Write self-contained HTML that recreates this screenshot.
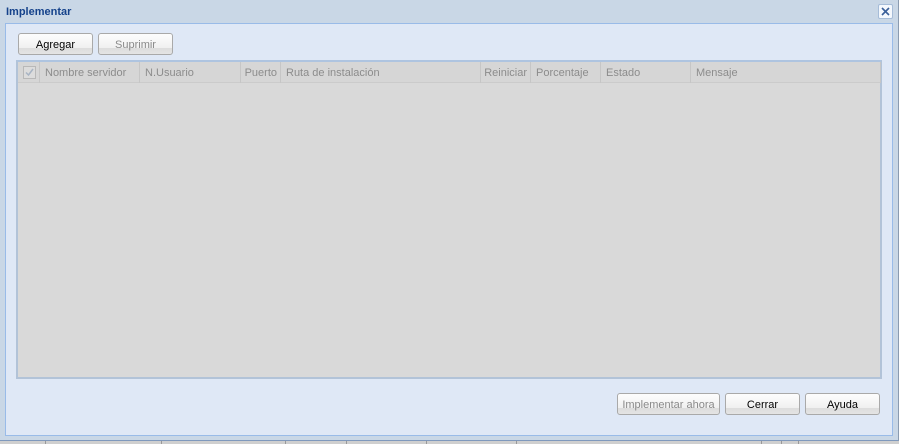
<!DOCTYPE html>
<html><head><meta charset="utf-8"><style>
*{margin:0;padding:0;box-sizing:border-box}
body{width:899px;height:444px;overflow:hidden;background:#cfcfcf;font-family:"Liberation Sans",sans-serif;font-size:11px;position:relative}
.win{position:absolute;left:0;top:0;width:899px;height:441px;background:#c9d7e6;border-right:1px solid #8a9bb0;border-bottom:1px solid #7f99bd}
.title{position:absolute;left:6px;top:6px;font-weight:bold;color:#15428b;font-size:11px}
.close{position:absolute;left:878px;top:4px;width:15px;height:15px;background:#f4f8fd;border:1px solid #a6bcd8;border-radius:2px}
.panel{position:absolute;left:5px;top:23px;width:888px;height:413px;background:#dfe8f6;border:1px solid #99bbe8}
.btn{position:absolute;height:22px;border:1px solid #a9a9a9;border-radius:3px;background:linear-gradient(#fdfdfd,#f0f0f0 70%,#dcdcdc 70%,#e4e4e4);text-align:center;line-height:22px;color:#000;font-size:11px}
.dis{color:#8a8a8a}
.grid{position:absolute;left:16px;top:60px;width:866px;height:319px;background:#d9d9d9;border:2px solid #b2c3d8;border-top-color:#aec4e0}
.hdr{position:absolute;left:0;top:0;width:862px;height:21px;background:#d6d6d6;border-bottom:1px solid #cbcbcb}
.col{position:absolute;top:0;height:21px;line-height:23px;color:#8c8c8c;padding-left:5px;border-right:1px solid #c6c6c6;white-space:nowrap;overflow:hidden}
.r{text-align:right;padding-right:3px;padding-left:0}
.chk{position:absolute;left:5px;top:4px;width:13px;height:13px;border:1px solid #b8b8b8;background:#dcdcdc}
.chk svg{position:absolute;left:0;top:0}
.strip{position:absolute;top:441px;height:3px;border-left:1px solid #999}
</style></head><body>
<div class="win">
<div class="title">Implementar</div>
<div class="close"><svg width="13" height="13" viewBox="0 0 13 13"><path d="M3 3L10 10M10 3L3 10" stroke="#3a5f99" stroke-width="1.6"/></svg></div>
<div class="panel"></div>
<div class="btn" style="left:18px;top:33px;width:75px">Agregar</div>
<div class="btn dis" style="left:98px;top:33px;width:75px">Suprimir</div>
<div class="grid"><div class="hdr">
<div class="col" style="left:0;width:22px"><div class="chk"><svg width="11" height="11" viewBox="0 0 11 11"><path d="M2 5.5L4.5 8L9 2" stroke="#a8b4c4" stroke-width="1.5" fill="none"/></svg></div></div>
<div class="col" style="left:22px;width:100px">Nombre servidor</div>
<div class="col" style="left:122px;width:101px">N.Usuario</div>
<div class="col r" style="left:223px;width:40px">Puerto</div>
<div class="col" style="left:263px;width:200px">Ruta de instalación</div>
<div class="col r" style="left:463px;width:50px">Reiniciar</div>
<div class="col" style="left:513px;width:70px">Porcentaje</div>
<div class="col" style="left:583px;width:90px">Estado</div>
<div class="col" style="left:673px;width:190px">Mensaje</div>
</div></div>
<div class="btn dis" style="left:617px;top:393px;width:103px">Implementar ahora</div>
<div class="btn" style="left:725px;top:393px;width:75px">Cerrar</div>
<div class="btn" style="left:805px;top:393px;width:75px">Ayuda</div>
</div>
<div class="strip" style="left:45px"></div><div class="strip" style="left:161px"></div><div class="strip" style="left:285px"></div><div class="strip" style="left:346px"></div><div class="strip" style="left:426px"></div><div class="strip" style="left:516px"></div><div class="strip" style="left:761px"></div><div class="strip" style="left:781px"></div><div class="strip" style="left:798px"></div>
</body></html>
